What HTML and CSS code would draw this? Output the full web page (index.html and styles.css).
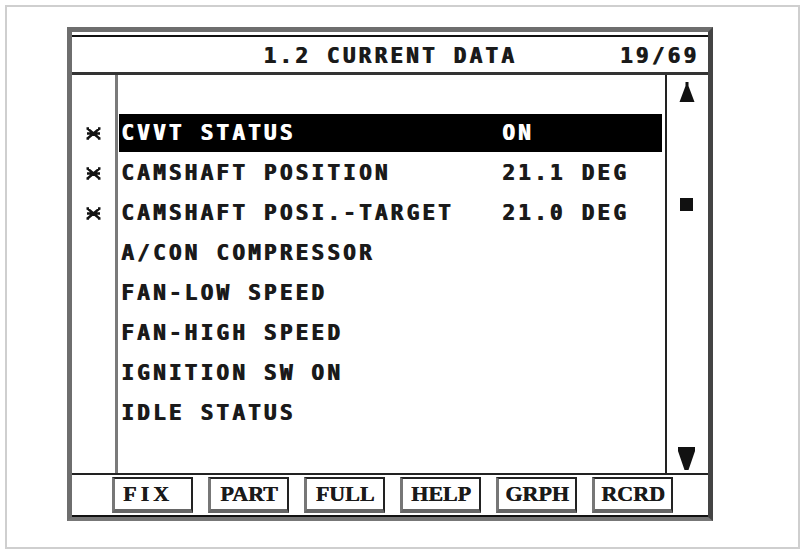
FILE: index.html
```html
<!DOCTYPE html>
<html lang="en">
<head>
    <meta charset="UTF-8">
    <meta name="viewport" content="width=device-width, initial-scale=1.0">
    <title>Current Data</title>
    <link rel="stylesheet" href="styles.css">
</head>
<body>
    <div class="page">
        <div class="device">
            <div class="header">
                <span></span>
                <span class="title">1.2 CURRENT DATA</span>
                <span class="count">19/69</span>
            </div>

            <div class="main">
                <div class="marks">
                    <div class="mark"><svg width="15" height="13" viewBox="0 0 15 13"><path d="M1.5 1.5 L13.5 11.5 M13.5 1.5 L1.5 11.5 M1 6.5 H14 M0.5 1.5 H3 M12 1.5 H14.5 M0.5 11.5 H3 M12 11.5 H14.5" stroke="#111" stroke-width="2.4" fill="none"/></svg></div>
                    <div class="mark"><svg width="15" height="13" viewBox="0 0 15 13"><path d="M1.5 1.5 L13.5 11.5 M13.5 1.5 L1.5 11.5 M1 6.5 H14 M0.5 1.5 H3 M12 1.5 H14.5 M0.5 11.5 H3 M12 11.5 H14.5" stroke="#111" stroke-width="2.4" fill="none"/></svg></div>
                    <div class="mark"><svg width="15" height="13" viewBox="0 0 15 13"><path d="M1.5 1.5 L13.5 11.5 M13.5 1.5 L1.5 11.5 M1 6.5 H14 M0.5 1.5 H3 M12 1.5 H14.5 M0.5 11.5 H3 M12 11.5 H14.5" stroke="#111" stroke-width="2.4" fill="none"/></svg></div>
                </div>

                <div class="list">
                    <div class="row selected"><span class="label">CVVT STATUS</span><span class="value">ON</span></div>
                    <div class="row"><span class="label">CAMSHAFT POSITION</span><span class="value">21.1 DEG</span></div>
                    <div class="row"><span class="label">CAMSHAFT POSI.-TARGET</span><span class="value">21.0 DEG</span></div>
                    <div class="row"><span class="label">A/CON COMPRESSOR</span></div>
                    <div class="row"><span class="label">FAN-LOW SPEED</span></div>
                    <div class="row"><span class="label">FAN-HIGH SPEED</span></div>
                    <div class="row"><span class="label">IGNITION SW ON</span></div>
                    <div class="row"><span class="label">IDLE STATUS</span></div>
                </div>

                <div class="scroll">
                    <svg class="arrow-up" width="16" height="20" viewBox="0 0 16 20"><path d="M6.5 0 H9.5 V4 L15.5 20 H0.5 L6.5 4 Z" fill="#111"/></svg>
                    <div class="thumb"></div>
                    <svg class="arrow-down" width="17" height="23" viewBox="0 0 17 23"><path d="M0 0 H17 V4 L10.5 23 H6.5 L0 4 Z" fill="#111"/></svg>
                </div>
            </div>

            <div class="footer">
                <button type="button" class="key key-fix">FIX</button>
                <button type="button" class="key">PART</button>
                <button type="button" class="key">FULL</button>
                <button type="button" class="key">HELP</button>
                <button type="button" class="key">GRPH</button>
                <button type="button" class="key">RCRD</button>
            </div>
        </div>
    </div>
</body>
</html>
```

FILE: styles.css
```css
body {
    margin: 0;
    padding: 5px;
    background-color: #FFFFFF;
    font-family: 'DejaVu Sans Mono', 'Liberation Mono', monospace;
    color: #1A1A1A;
}

.page {
    box-sizing: border-box;
    width: 795px;
    height: 544px;
    border: 2px solid #CFCFCF;
    padding: 20px 0 0 60px;
}

.device {
    box-sizing: border-box;
    width: 646px;
    height: 494px;
    border-top: 5px solid #6E6E6E;
    border-left: 5px solid #6E6E6E;
    border-right: 5px solid #444444;
    border-bottom: 4px solid #777777;
    display: flex;
    flex-direction: column;
}

/* header line */
.header {
    margin-top: 3px;
    border-top: 2px solid #111111;
    border-bottom: 3px solid #333333;
    height: 35px;
    box-sizing: content-box;
    display: grid;
    grid-template-columns: 1fr auto 1fr;
    font-size: 21px;
    font-weight: bold;
    letter-spacing: 3.2px;
    line-height: 31px;
    text-shadow: 1px 0 0 currentColor;
}

.header span {
    padding-top: 4px;
    height: 31px;
}

.count {
    text-align: right;
    padding-right: 9px;
}

/* data area */
.main {
    display: flex;
    height: 398px;
}

.marks {
    width: 43px;
    border-right: 3px solid #7A7A7A;
    padding-top: 39px;
    display: flex;
    flex-direction: column;
    gap: 2px;
}

.mark {
    height: 38px;
    display: flex;
    align-items: center;
    justify-content: center;
}

.list {
    width: 547px;
    padding-top: 39px;
    display: flex;
    flex-direction: column;
    gap: 2px;
    font-size: 21px;
    font-weight: bold;
    letter-spacing: 3.2px;
    text-shadow: 1px 0 0 currentColor;
}

.row {
    height: 38px;
    margin: 0 3px 0 1px;
    padding-left: 2px;
    display: flex;
    align-items: center;
    white-space: nowrap;
}

.row.selected {
    background-color: #000000;
    color: #FFFFFF;
}

.label {
    width: 381px;
}

/* scroll bar */
.scroll {
    width: 41px;
    border-left: 2px solid #222222;
    display: flex;
    flex-direction: column;
    align-items: center;
    padding: 7px 0 3px 0;
    box-sizing: border-box;
}

.thumb {
    width: 13px;
    height: 13px;
    background-color: #111111;
    margin-top: 96px;
}

.arrow-down {
    margin-top: auto;
}

/* function keys */
.footer {
    border-top: 2px solid #222222;
    border-bottom: 2px solid #111111;
    height: 40px;
    box-sizing: content-box;
    padding-left: 40px;
    display: flex;
    align-items: center;
    gap: 15px;
}

.key {
    box-sizing: border-box;
    width: 81px;
    height: 36px;
    padding: 0;
    background-color: #FFFFFF;
    border-top: 2px solid #222222;
    border-left: 3px solid #777777;
    border-right: 2px solid #222222;
    border-bottom: 4px solid #666666;
    font-family: 'Liberation Serif', serif;
    font-size: 22px;
    font-weight: bold;
    color: #1A1A1A;
    text-align: center;
    line-height: 28px;
    text-shadow: 0.5px 0 0 currentColor;
}

.key-fix {
    letter-spacing: 4px;
    text-align: left;
    padding-left: 8px;
}
```
